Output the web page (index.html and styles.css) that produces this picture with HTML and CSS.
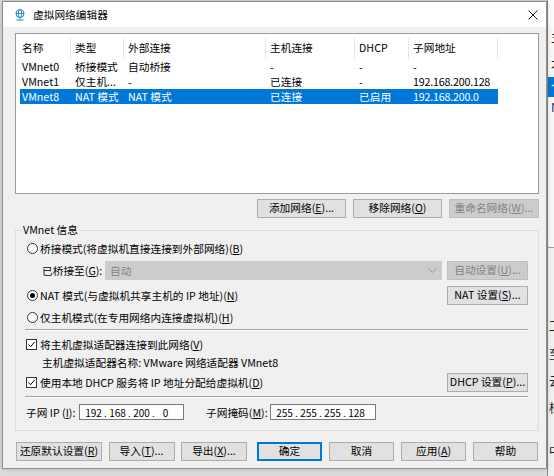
FILE: index.html
```html
<!DOCTYPE html>
<html lang="zh-CN">
<head>
<meta charset="utf-8">
<title>虚拟网络编辑器</title>
<link rel="stylesheet" href="styles.css">
</head>
<body>
<div class="desk">
  <div class="bgwin">
    <div class="bg-top"></div>
    <div class="bg-item i1">主</div>
    <div class="bg-item i2">才</div>
    <div class="bg-item bsel">个</div>
    <div class="bg-item i3">N</div>
    <div class="bg-pane">
      <div class="bg-cell k1">工</div>
      <div class="bg-cell k2">至</div>
      <div class="bg-cell k3">云</div>
      <div class="bg-cell k4">桓</div>
      <div class="bg-cell k5">中</div>
    </div>
  </div>

  <div class="dialog">
    <div class="titlebar">
      <svg class="appicon" viewBox="0 0 10 12" aria-hidden="true">
        <circle cx="5" cy="4.5" r="4" fill="none" stroke="#1787cf" stroke-width="1"/>
        <ellipse cx="5" cy="4.5" rx="1.7" ry="4" fill="none" stroke="#1787cf" stroke-width="0.9"/>
        <line x1="1" y1="4.5" x2="9" y2="4.5" stroke="#1787cf" stroke-width="0.9"/>
        <line x1="5" y1="8.5" x2="5" y2="10.5" stroke="#2a9fb0" stroke-width="1"/>
        <line x1="1.5" y1="11" x2="8.5" y2="11" stroke="#2ab0a0" stroke-width="1.2"/>
      </svg>
      <span class="title">虚拟网络编辑器</span>
      <svg class="close" viewBox="0 0 10 10" aria-hidden="true">
        <line x1="0.5" y1="0.5" x2="9.5" y2="9.5" stroke="#1a1a1a" stroke-width="1"/>
        <line x1="9.5" y1="0.5" x2="0.5" y2="9.5" stroke="#1a1a1a" stroke-width="1"/>
      </svg>
    </div>

    <div class="content">
      <div class="list">
        <table class="grid">
          <thead>
            <tr>
              <th class="c1">名称</th><th class="c2">类型</th><th class="c3">外部连接</th>
              <th class="c4">主机连接</th><th class="c5">DHCP</th><th class="c6">子网地址</th>
            </tr>
          </thead>
          <tbody>
            <tr><td>VMnet0</td><td>桥接模式</td><td>自动桥接</td><td>-</td><td>-</td><td>-</td></tr>
            <tr><td>VMnet1</td><td>仅主机...</td><td>-</td><td>已连接</td><td>-</td><td class="num">192.168.200.128</td></tr>
            <tr class="sel"><td>VMnet8</td><td>NAT 模式</td><td>NAT 模式</td><td>已连接</td><td>已启用</td><td class="num">192.168.200.0</td></tr>
          </tbody>
        </table>
      </div>

      <div class="listbtns">
        <button class="btn w89">添加网络(<u>E</u>)...</button>
        <button class="btn w89">移除网络(<u>O</u>)</button>
        <button class="btn w90 dis">重命名网络(<u>W</u>)...</button>
      </div>

      <fieldset class="group">
        <legend>VMnet 信息</legend>
        <div class="gin">
          <div class="row r-bridge">
            <span class="radio"></span>
            <span class="lbl">桥接模式(将虚拟机直接连接到外部网络)(<u>B</u>)</span>
          </div>
          <div class="row r-bridged">
            <span class="blabel">已桥接至(<u>G</u>):</span>
            <div class="combo"><span class="ctext">自动</span>
              <svg class="chev" viewBox="0 0 9 5" aria-hidden="true"><polyline points="0.5,0.5 4.5,4.5 8.5,0.5" fill="none" stroke="#9a9a9a" stroke-width="1"/></svg>
            </div>
            <button class="btn w81 dis side">自动设置(<u>U</u>)...</button>
          </div>
          <div class="row r-nat">
            <span class="radio on"></span>
            <span class="lbl">NAT 模式(与虚拟机共享主机的 IP 地址)(<u>N</u>)</span>
            <button class="btn w81 push">NAT 设置(<u>S</u>)...</button>
          </div>
          <div class="row r-host">
            <span class="radio"></span>
            <span class="lbl">仅主机模式(在专用网络内连接虚拟机)(<u>H</u>)</span>
          </div>
          <div class="sep s1"></div>
          <div class="row r-check1">
            <span class="check"><svg viewBox="0 0 9 9" aria-hidden="true"><polyline points="1.5,4.5 3.5,6.7 7.6,2" fill="none" stroke="#000" stroke-width="1"/></svg></span>
            <span class="lbl cl">将主机虚拟适配器连接到此网络(<u>V</u>)</span>
          </div>
          <div class="row r-adapter">
            <span>主机虚拟适配器名称: VMware 网络适配器 VMnet8</span>
          </div>
          <div class="row r-dhcp">
            <span class="check"><svg viewBox="0 0 9 9" aria-hidden="true"><polyline points="1.5,4.5 3.5,6.7 7.6,2" fill="none" stroke="#000" stroke-width="1"/></svg></span>
            <span class="lbl cl">使用本地 DHCP 服务将 IP 地址分配给虚拟机(<u>D</u>)</span>
            <button class="btn w81 push">DHCP 设置(<u>P</u>)...</button>
          </div>
          <div class="sep s2"></div>
          <div class="row r-subnet">
            <span class="sl1">子网 IP (<u>I</u>):</span>
            <div class="ipbox w105">
              <span class="f">192</span><span class="d">.</span><span class="f">168</span><span class="d">.</span><span class="f">200</span><span class="d">.</span><span class="f">0</span>
            </div>
            <span class="sl2">子网掩码(<u>M</u>):</span>
            <div class="ipbox w106">
              <span class="f">255</span><span class="d">.</span><span class="f">255</span><span class="d">.</span><span class="f">255</span><span class="d">.</span><span class="f">128</span>
            </div>
          </div>
        </div>
      </fieldset>

      <div class="footer">
        <div class="fl">
          <button class="btn w86">还原默认设置(<u>R</u>)</button>
          <button class="btn w66">导入(<u>T</u>)...</button>
          <button class="btn w66">导出(<u>X</u>)...</button>
        </div>
        <div class="fr">
          <button class="btn w65 def">确定</button>
          <button class="btn w65">取消</button>
          <button class="btn w65">应用(<u>A</u>)</button>
          <button class="btn w65">帮助</button>
        </div>
      </div>
    </div>
  </div>
</div>
</body>
</html>
```

FILE: styles.css
```css
* { box-sizing: border-box; }
html, body { margin: 0; padding: 0; }
body {
  width: 554px;
  height: 476px;
  overflow: hidden;
  background: #e9e9e9;
  font-family: "Noto Sans CJK SC", "Noto Sans", sans-serif;
  font-size: 10.7px;
  color: #000;
}
u { text-decoration-thickness: 1px; text-underline-offset: 1px; }

.desk { position: relative; width: 554px; height: 476px; overflow: hidden; background: #dcdcdc; }

/* background window peeking at right edge */
.bgwin {
  position: absolute;
  left: 547px;
  top: 0;
  width: 30px;
  height: 476px;
  background: #f7f7f7;
  border-left: 1px solid #8a8a8a;
  display: flex;
  flex-direction: column;
  font-size: 12px;
  line-height: 16px;
  color: #1a1a1a;
}
.bg-top { height: 28px; background: #fbfbfb; flex: none; }
.bg-item { height: 16px; padding-left: 3px; flex: none; }
.i1 { margin-top: 1px; }
.i2 { margin-top: 11px; }
.bsel { margin-top: 5px; height: 20px; line-height: 20px; background: #0078d7; color: #fff; }
.i3 { margin-top: 2px; color: #1a2a6a; }
.bg-pane { margin-top: 132px; border-top: 1px solid #a0a0a0; background: #f0f0f0; flex: 1; display: flex; flex-direction: column; }
.bg-cell { height: 16px; padding-left: 1px; flex: none; }
.k1 { margin-top: 70px; }
.k2 { margin-top: 12px; }
.k3 { margin-top: 11px; }
.k4 { margin-top: 11px; }
.k5 { margin-top: 27px; }

/* dialog window */
.dialog {
  position: absolute;
  left: 2px;
  top: 1px;
  width: 545px;
  height: 468px;
  border: 1px solid #8f8f8f;
  background: #f0f0f0;
  display: flex;
  flex-direction: column;
  box-shadow: 0 0 5px rgba(0, 0, 0, 0.2);
}
.titlebar {
  height: 25px;
  background: #fff;
  display: flex;
  align-items: center;
  padding: 0 8px 0 12px;
  flex: none;
}
.appicon { width: 10px; height: 12px; flex: none; }
.title { margin-left: 8px; line-height: 14px; }
.close { margin-left: auto; width: 10px; height: 10px; flex: none; }

.content { padding: 6px 7px 0 12px; display: flex; flex-direction: column; }

/* list view */
.list { height: 161px; border: 1px solid #9a9a9a; background: #fff; flex: none; }
.grid { border-collapse: collapse; table-layout: fixed; width: 478px; margin-left: 4px; }
.grid th {
  height: 25px;
  padding: 2px 0 0 4px;
  font-weight: normal;
  text-align: left;
  position: relative;
  white-space: nowrap;
}
.grid th::after {
  content: "";
  position: absolute;
  right: 0;
  top: 4px;
  bottom: 0;
  width: 1px;
  background: #e5e5e5;
}
.grid td { height: 15px; padding: 0 0 0 4px; line-height: 15px; white-space: nowrap; overflow: hidden; }
.grid th.c1, .grid td:first-child { padding-left: 2px; }
.grid .num { letter-spacing: -0.2px; }
.c1 { width: 51px; }
.c2 { width: 53px; }
.c3 { width: 142px; }
.c4 { width: 89px; }
.c5 { width: 54px; }
.c6 { width: 89px; }
.grid tr.sel td { background: #0078d7; color: #fff; }

/* buttons */
.btn {
  height: 19px;
  border: 1px solid #adadad;
  background: #e1e1e1;
  font: inherit;
  color: #000;
  padding: 0;
  display: flex;
  align-items: center;
  justify-content: center;
  line-height: 1;
  white-space: nowrap;
  flex: none;
}
.btn.dis { background: #cccccc; border-color: #bfbfbf; color: #838383; }
.btn.def { border-color: #0078d7; box-shadow: inset 0 0 0 1px #0078d7; }
.w65 { width: 65px; }
.w66 { width: 66px; }
.w81 { width: 81px; }
.w86 { width: 86px; }
.w89 { width: 89px; }
.w90 { width: 90px; }

.listbtns { display: flex; justify-content: flex-end; gap: 7px; margin-top: 5px; flex: none; }

/* group box */
.group { margin: 5px 0 0; padding: 0; border: 1px solid #dcdcdc; min-width: 0; flex: none; }
.group legend { margin-left: 6px; padding: 0 1px; line-height: 14px; height: 14px; }
.gin { padding: 0 10px 10px 11px; display: flex; flex-direction: column; }
.row { display: flex; align-items: center; flex: none; }
.lbl { margin-left: 2px; white-space: nowrap; }
.lbl.cl { margin-left: 3px; }
.push { margin-left: auto; }

.radio {
  width: 11px;
  height: 11px;
  border: 1px solid #333;
  border-radius: 50%;
  background: #fff;
  flex: none;
  display: flex;
  align-items: center;
  justify-content: center;
}
.radio.on::after { content: ""; width: 5px; height: 5px; border-radius: 50%; background: #000; }
.check { width: 11px; height: 11px; border: 1px solid #333; background: #fff; flex: none; margin-left: -1px; display: flex; }
.check svg { width: 9px; height: 9px; }

.r-bridge { margin-top: 3px; height: 16px; }
.r-bridged { margin-top: 5px; height: 19px; padding-left: 15px; }
.blabel { width: 63px; white-space: nowrap; flex: none; }
.combo {
  width: 337px;
  height: 19px;
  background: #cccccc;
  border: 1px solid #cccccc;
  display: flex;
  align-items: center;
  padding: 0 4px 0 4px;
  color: #838383;
  flex: none;
}
.chev { width: 9px; height: 5px; margin-left: auto; }
.side { margin-left: 5px; }
.r-nat { margin-top: 6px; height: 19px; }
.r-host { margin-top: 4px; height: 16px; }
.sep { height: 2px; border-top: 1px solid #a0a0a0; border-bottom: 1px solid #ffffff; margin-left: -2px; flex: none; }
.s1 { margin-top: 4px; }
.r-check1 { margin-top: 5px; height: 16px; }
.r-adapter { margin-top: 2px; height: 16px; padding-left: 15px; }
.r-dhcp { margin-top: 3px; height: 19px; }
.s2 { margin-top: 4px; }
.r-subnet { margin-top: 6px; height: 16px; }
.sl1 { width: 53px; margin-left: -1px; white-space: nowrap; flex: none; }
.sl2 { width: 64px; margin-left: 22px; white-space: nowrap; flex: none; }
.ipbox {
  height: 16px;
  border: 1px solid #7a7a7a;
  background: #fff;
  display: flex;
  align-items: center;
  padding-left: 4px;
  flex: none;
  font-size: 10px;
}
.w105 { width: 105px; }
.w106 { width: 106px; }
.ipbox .f { width: 19px; text-align: center; }
.ipbox .d { width: 5px; text-align: center; }

/* footer */
.footer { margin-top: 11px; display: flex; padding: 0 1px; flex: none; }
.fl { display: flex; gap: 6.5px; }
.fr { display: flex; gap: 7px; margin-left: auto; }
```
